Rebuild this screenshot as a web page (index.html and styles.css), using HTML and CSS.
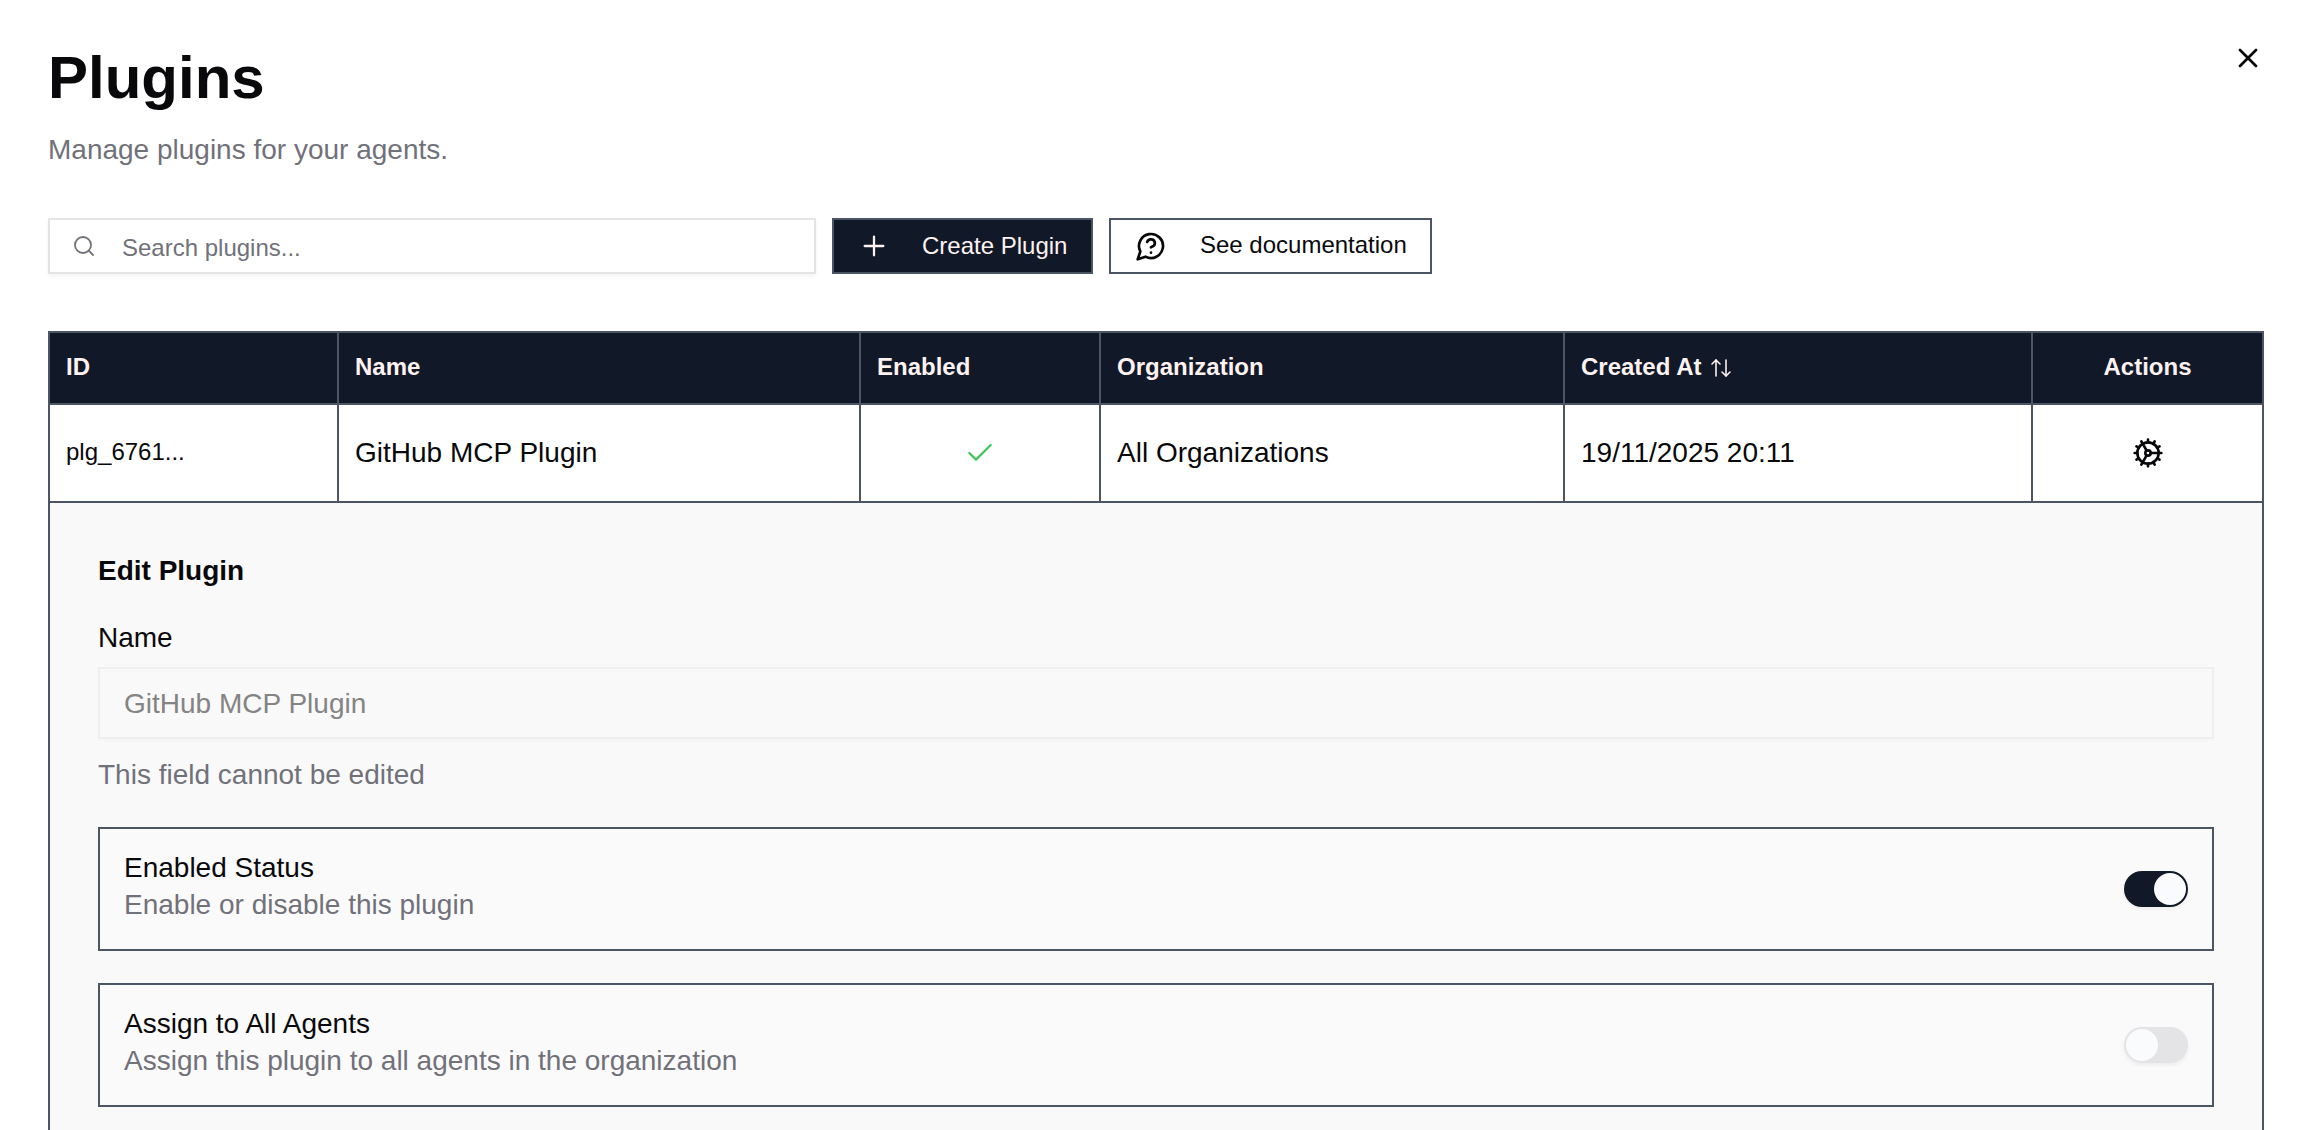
FILE: index.html
```html
<!DOCTYPE html>
<html lang="en">
<head>
<meta charset="utf-8">
<title>Plugins</title>
<link rel="stylesheet" href="styles.css">
</head>
<body>
<main class="page">
  <header class="page-header">
    <div>
      <h1 class="title">Plugins</h1>
      <p class="subtitle">Manage plugins for your agents.</p>
    </div>
    <button class="close" aria-label="Close">
      <svg class="icon" viewBox="0 0 24 24"><path d="M18 6 6 18"/><path d="m6 6 12 12"/></svg>
    </button>
  </header>

  <div class="toolbar">
    <label class="search">
      <svg class="icon icon-search" viewBox="0 0 24 24"><circle cx="11" cy="11" r="8"/><path d="m21 21-4.3-4.3"/></svg>
      <span>Search plugins...</span>
    </label>
    <button class="btn btn-primary">
      <svg class="icon icon-thin" viewBox="0 0 24 24"><path d="M5 12h14"/><path d="M12 5v14"/></svg>
      <span>Create Plugin</span>
    </button>
    <button class="btn btn-outline">
      <svg class="icon" viewBox="0 0 24 24"><path d="M7.9 20A9 9 0 1 0 4 16.1L2 22Z"/><path d="M9.09 9a3 3 0 0 1 5.83 1c0 2-3 3-3 3"/><path d="M12 17h.01"/></svg>
      <span>See documentation</span>
    </button>
  </div>

  <table class="table">
    <colgroup>
      <col class="col-id"><col class="col-name"><col class="col-enabled"><col class="col-org"><col class="col-created"><col class="col-actions">
    </colgroup>
    <thead>
      <tr>
        <th>ID</th>
        <th>Name</th>
        <th>Enabled</th>
        <th>Organization</th>
        <th><span class="sort">Created At
          <svg class="icon icon-sort" viewBox="0 0 24 24"><path d="m21 16-4 4-4-4"/><path d="M17 20V4"/><path d="m3 8 4-4 4 4"/><path d="M7 4v16"/></svg></span></th>
        <th class="center">Actions</th>
      </tr>
    </thead>
    <tbody>
      <tr class="row">
        <td class="id">plg_6761...</td>
        <td>GitHub MCP Plugin</td>
        <td class="center"><svg class="icon icon-thin icon-check" viewBox="0 0 24 24"><path d="M20 6 9 17l-5-5"/></svg></td>
        <td>All Organizations</td>
        <td>19/11/2025 20:11</td>
        <td class="center"><svg class="icon" viewBox="0 0 24 24"><path d="M12 20a8 8 0 1 0 0-16 8 8 0 0 0 0 16Z"/><path d="M12 14a2 2 0 1 0 0-4 2 2 0 0 0 0 4Z"/><path d="M12 2v2"/><path d="M12 22v-2"/><path d="m17 20.66-1-1.73"/><path d="M11 10.27 7 3.34"/><path d="m20.66 17-1.73-1"/><path d="m3.34 7 1.73 1"/><path d="M14 12h8"/><path d="M2 12h2"/><path d="m20.66 7-1.73 1"/><path d="m3.34 17 1.73-1"/><path d="m17 3.34-1 1.73"/><path d="m11 13.73-4 6.93"/></svg></td>
      </tr>
      <tr>
        <td class="editor" colspan="6">
          <h2 class="editor-title">Edit Plugin</h2>
          <div class="label">Name</div>
          <div class="field">GitHub MCP Plugin</div>
          <p class="hint">This field cannot be edited</p>
          <section class="option">
            <div>
              <div class="option-title">Enabled Status</div>
              <div class="option-text">Enable or disable this plugin</div>
            </div>
            <span class="switch switch-on"><span class="thumb"></span></span>
          </section>
          <section class="option">
            <div>
              <div class="option-title">Assign to All Agents</div>
              <div class="option-text">Assign this plugin to all agents in the organization</div>
            </div>
            <span class="switch"><span class="thumb"></span></span>
          </section>
        </td>
      </tr>
    </tbody>
  </table>
</main>
</body>
</html>
```
FILE: styles.css
```css
* {
  box-sizing: border-box;
  margin: 0;
}

body {
  background: #fff;
  color: #09090b;
  font: 28px/36px "Liberation Sans", Arial, Helvetica, sans-serif;
}

button {
  font: inherit;
  color: inherit;
}

.page {
  padding: 48px 56px 0 48px;
}

.icon {
  display: block;
  flex: none;
  width: 32px;
  height: 32px;
  fill: none;
  stroke: currentColor;
  stroke-width: 2;
  stroke-linecap: round;
  stroke-linejoin: round;
}

.icon-thin {
  stroke-width: 1.7;
}

.page-header {
  display: flex;
  justify-content: space-between;
  align-items: flex-start;
  height: 170px;
}

.title {
  font-size: 60px;
  line-height: 60px;
}

.subtitle {
  margin-top: 22px;
  line-height: 40px;
  color: #71717a;
}

.close {
  margin-top: -6px;
  padding: 0;
  border: 0;
  background: none;
}

.toolbar {
  display: flex;
  gap: 16px;
  height: 56px;
  margin-bottom: 57px;
  font-size: 24px;
}

.search {
  display: flex;
  align-items: center;
  gap: 26px;
  width: 768px;
  padding: 3px 22px 0;
  border: 2px solid #e4e4e7;
  box-shadow: 0 2px 4px rgba(0, 0, 0, 0.05);
  color: #71717a;
}

.icon-search {
  width: 24px;
  height: 24px;
  margin-top: -3px;
  stroke-width: 1.8;
}

.btn {
  display: flex;
  align-items: center;
  gap: 32px;
  padding: 0 24px;
  border: 2px solid #4b5563;
  white-space: nowrap;
}

.btn-primary {
  width: 261px;
  background: #111827;
  color: #fef2f2;
}

.btn-outline {
  width: 323px;
  gap: 33px;
  background: #fff;
}

.btn-outline span {
  margin-top: -2px;
}

.table {
  width: 2216px;
  table-layout: fixed;
  border: 2px solid #4b5563;
  border-bottom: 0;
  border-collapse: separate;
  border-spacing: 0;
}

.col-id { width: 289px; }
.col-name { width: 522px; }
.col-enabled { width: 240px; }
.col-org { width: 464px; }
.col-created { width: 468px; }
.col-actions { width: 229px; }

.table th,
.table td {
  padding: 0 16px;
  border: solid #4b5563;
  border-width: 0 2px 2px 0;
  text-align: left;
  vertical-align: middle;
}

.table th:last-child,
.table td:last-child {
  border-right: 0;
}

.table th {
  height: 72px;
  padding-bottom: 2px;
  background: #111827;
  color: #fef2f2;
  font-size: 24px;
}

.table .row td {
  height: 98px;
}

.table .row .id {
  padding-bottom: 2px;
  font-size: 24px;
}

.table .center {
  text-align: center;
}

.center .icon {
  margin: 0 auto;
}

.sort {
  display: flex;
  align-items: center;
  gap: 8px;
}

.icon-sort {
  width: 24px;
  height: 24px;
  margin-top: 2px;
  stroke-width: 1.6;
}

.icon-check {
  color: #3fc55b;
}

.table .editor {
  height: 627px;
  padding: 48px 48px 0;
  border-bottom: 0;
  background: #f9f9f9;
  vertical-align: top;
}

.editor-title {
  font-size: 28px;
  line-height: 40px;
}

.label {
  margin-top: 28px;
  line-height: 38px;
}

.field {
  height: 72px;
  margin-top: 10px;
  padding: 0 24px;
  border: 2px solid #efeff0;
  box-shadow: 0 2px 3px rgba(0, 0, 0, 0.02);
  line-height: 70px;
  color: #848484;
}

.hint {
  margin: 18px 0 34px;
  color: #71717a;
}

.option {
  display: flex;
  align-items: center;
  justify-content: space-between;
  height: 124px;
  padding: 0 24px;
  border: 2px solid #4b5563;
  background: #fafafa;
}

.option + .option {
  margin-top: 32px;
}

.option > div {
  margin-top: -6px;
}

.option-title,
.option-text {
  line-height: 37px;
}

.option-text {
  color: #71717a;
}

.switch {
  display: flex;
  width: 64px;
  height: 36px;
  padding: 2px;
  border-radius: 18px;
  background: #e4e4e7;
  box-shadow: 0 2px 4px rgba(0, 0, 0, 0.06);
}

.switch-on {
  justify-content: flex-end;
  background: #111827;
}

.thumb {
  width: 32px;
  height: 32px;
  border-radius: 50%;
  background: #fafbfd;
}
```
